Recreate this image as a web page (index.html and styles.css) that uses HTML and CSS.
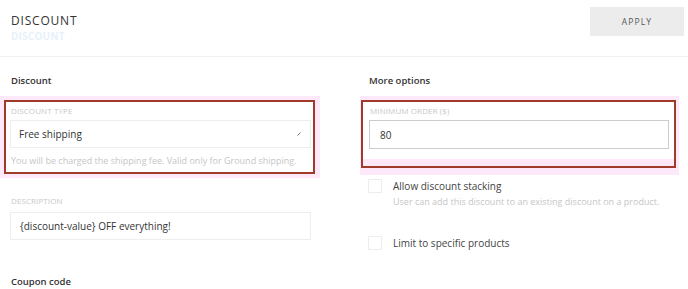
FILE: index.html
```html
<!DOCTYPE html>
<html lang="en">
  <head>
    <meta charset="UTF-8" />
    <title>Discount</title>
    <link rel="stylesheet" href="styles.css">
  </head>
  <body>
    <div class="top-bar">
      <div class="title-wrap">
        <h1 class="page-title">DISCOUNT</h1>
        <span class="ghost">DISCOUNT</span>
      </div>
      <button class="apply-btn">APPLY</button>
    </div>

    <div class="content">
      <div class="col col-left">
        <h2 class="section-title">Discount</h2>

        <div class="pink-wrap">
          <div class="red-box">
            <label class="field-label">DISCOUNT TYPE</label>
            <div class="select-box">
              <span>Free shipping</span>
              <svg class="caret" width="6" height="6" viewBox="0 0 6 6"><path d="M1.5 4.5 L4.5 1.5" stroke="#777" stroke-width="1"/></svg>
            </div>
            <p class="help">You will be charged the shipping fee. Valid only for Ground shipping.</p>
          </div>
        </div>

        <div class="field">
          <label class="field-label">DESCRIPTION</label>
          <div class="text-box">{discount-value} OFF everything!</div>
        </div>

        <h2 class="section-title coupon">Coupon code</h2>
      </div>

      <div class="col col-right">
        <h2 class="section-title">More options</h2>

        <div class="pink-wrap pink-right">
          <div class="red-box red-right">
            <div class="white-part">
              <label class="field-label">MINIMUM ORDER ($)</label>
              <div class="text-box dark">80</div>
            </div>
          </div>
        </div>

        <div class="check-row">
          <span class="checkbox"></span>
          <div>
            <div class="check-label">Allow discount stacking</div>
            <div class="help">User can add this discount to an existing discount on a product.</div>
          </div>
        </div>

        <div class="check-row second">
          <span class="checkbox"></span>
          <div>
            <div class="check-label">Limit to specific products</div>
          </div>
        </div>
      </div>
    </div>
  </body>
</html>
```

FILE: styles.css
```css
body {
    margin: 0;
    font-family: "Open Sans", "Liberation Sans", sans-serif;
    background: #fff;
    color: #333;
}

.top-bar {
    display: flex;
    justify-content: space-between;
    align-items: flex-start;
    height: 57px;
    padding: 7px 4px 0 11px;
    box-sizing: border-box;
    border-bottom: 1px solid #f0f0f0;
}

.title-wrap {
    display: flex;
    flex-direction: column;
}

.page-title {
    margin: 6px 0 0;
    font-size: 12px;
    font-weight: 400;
    letter-spacing: 0.8px;
    color: #333;
    line-height: 16px;
}

.ghost {
    margin-top: 2px;
    font-size: 10px;
    font-weight: 700;
    color: #e6f2fa;
    line-height: 10px;
    letter-spacing: 0.2px;
}

.apply-btn {
    width: 94px;
    height: 29px;
    border: none;
    background: #ececec;
    color: #555;
    font-family: inherit;
    font-size: 8.5px;
    letter-spacing: 1.1px;
    padding: 0;
}

.content {
    display: flex;
}

.col-left {
    width: 320px;
}

.col-right {
    margin-left: 40px;
    width: 319px;
}

.section-title {
    margin: 0;
    padding: 18px 0 0 11px;
    height: 39px;
    box-sizing: border-box;
    font-size: 9.5px;
    font-weight: 600;
    line-height: 12px;
    color: #333;
}

.col-right .section-title {
    padding-left: 9px;
}

.pink-wrap {
    background: #fde9fa;
    padding: 4px 5px 4px 4px;
}

.red-box {
    border: 2px solid #9e3b2b;
    background: #fff;
    padding: 0 2px 5px 4px;
}

.field-label {
    display: block;
    font-size: 8px;
    color: #c8c8c8;
    line-height: 10px;
    padding: 4px 0 4px 1px;
    letter-spacing: 0.1px;
}

.select-box {
    display: flex;
    justify-content: space-between;
    align-items: center;
    height: 28px;
    box-sizing: border-box;
    border: 1px solid #eee;
    padding: 0 8px;
    font-size: 10px;
    color: #333;
}

.help {
    margin: 0;
    font-size: 9px;
    line-height: 12px;
    color: #c6c6c6;
    padding: 7px 0 0 1px;
}

.field {
    padding: 18px 9px 0 10px;
}

.field .field-label {
    padding: 0 0 6px 1px;
}

.text-box {
    height: 28px;
    box-sizing: border-box;
    border: 1px solid #eee;
    padding: 0 9px;
    display: flex;
    align-items: center;
    font-size: 10px;
    color: #333;
}

.text-box.dark {
    border-color: #ccc;
    height: 29px;
    padding: 0 10px;
}

.coupon {
    padding-top: 36px;
    height: auto;
}

.pink-right {
    padding: 4px 3px 7px 1px;
}

.red-right {
    background: #fde9fa;
    padding: 0 0 7px;
}

.white-part {
    background: #fff;
    padding: 0 5px 10px 6px;
}

.check-row {
    display: flex;
    gap: 11px;
    padding: 4px 0 0 8px;
}

.check-row.second {
    padding-top: 25px;
}

.checkbox {
    width: 14px;
    height: 14px;
    box-sizing: border-box;
    border: 1px solid #eee;
    flex-shrink: 0;
}

.check-label {
    font-size: 10px;
    line-height: 14px;
    color: #444;
}

.check-row .help {
    padding: 3px 0 3px;
}
```
